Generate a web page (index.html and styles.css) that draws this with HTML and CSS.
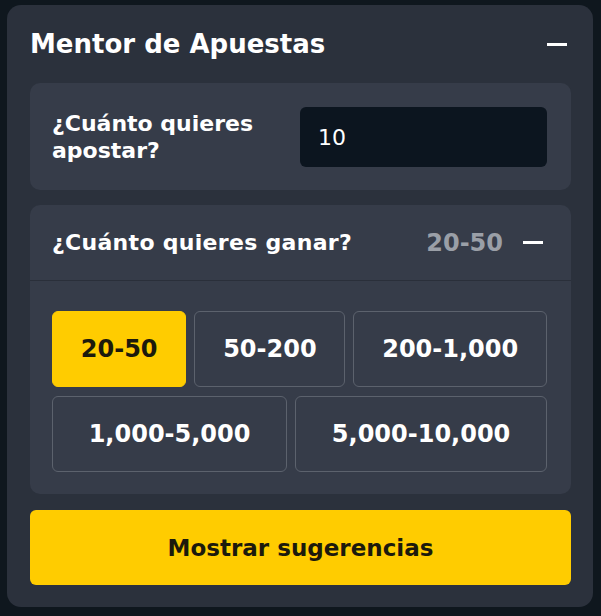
FILE: index.html
```html
<!DOCTYPE html>
<html lang="es">

<head>
    <meta charset="UTF-8">
    <meta name="viewport" content="width=device-width, initial-scale=1.0">
    <title>Mentor de Apuestas</title>
    <link rel="stylesheet" href="styles.css">
</head>

<body>
    <div class="mentor">
        <div class="mentor-header">
            <h1>Mentor de Apuestas</h1>
            <span class="dash"></span>
        </div>

        <div class="card stake">
            <label for="stake">¿Cuánto quieres apostar?</label>
            <input type="text" id="stake" value="10">
        </div>

        <div class="card win">
            <div class="win-header">
                <span class="win-title">¿Cuánto quieres ganar?</span>
                <span class="win-value">20-50</span>
                <span class="dash"></span>
            </div>
            <div class="ranges">
                <button class="range active">20-50</button>
                <button class="range">50-200</button>
                <button class="range">200-1,000</button>
                <button class="range">1,000-5,000</button>
                <button class="range">5,000-10,000</button>
            </div>
        </div>

        <button class="show">Mostrar sugerencias</button>
    </div>
</body>

</html>
```

FILE: styles.css
```css
body {
    font-family: "DejaVu Sans", sans-serif;
    background-color: #0f171e;
    color: white;
    margin: 0;
    padding: 5px 8px 9px 7px;
}

.mentor {
    background-color: #2b313c;
    border-radius: 14px;
    padding: 0 22px 22px 23px;
}

.mentor-header {
    display: flex;
    align-items: center;
    justify-content: space-between;
    height: 78px;
}

h1 {
    margin: 0;
    font-size: 26px;
    font-weight: 700;
}

.dash {
    display: block;
    width: 20px;
    height: 3px;
    background-color: white;
    margin-right: 4px;
}

.card {
    background-color: #363c49;
    border-radius: 10px;
}

.stake {
    display: flex;
    align-items: center;
    justify-content: space-between;
    padding: 24px 24px 23px 22px;
    margin-bottom: 15px;
}

.stake label {
    font-size: 22px;
    font-weight: 700;
    line-height: 27px;
    width: 230px;
}

.stake input {
    width: 247px;
    height: 60px;
    box-sizing: border-box;
    background-color: #0c151f;
    border: none;
    border-radius: 6px;
    color: white;
    font-family: inherit;
    font-size: 22px;
    padding: 0 18px;
    outline: none;
}

.win {
    margin-bottom: 16px;
}

.win-header {
    display: flex;
    align-items: center;
    height: 75px;
    padding: 0 24px 0 22px;
    border-bottom: 1px solid #2a2f3a;
}

.win-title {
    flex: 1;
    font-size: 22px;
    font-weight: 700;
    letter-spacing: 0.3px;
}

.win-value {
    color: #9a9fa7;
    font-size: 24px;
    font-weight: 700;
    margin-right: 20px;
}

.ranges {
    display: flex;
    flex-wrap: wrap;
    gap: 9px 8px;
    padding: 30px 24px 22px 22px;
}

.range {
    flex-grow: 1;
    height: 76px;
    padding: 0 24px;
    background-color: #363c49;
    border: 1px solid #5c626d;
    border-radius: 6px;
    color: white;
    font-family: inherit;
    font-size: 24px;
    font-weight: 700;
    cursor: pointer;
}

.range.active {
    background-color: #ffcc00;
    border-color: #ffcc00;
    color: #1c1a0c;
}

.show {
    display: block;
    width: 100%;
    height: 75px;
    background-color: #ffcc00;
    border: none;
    border-radius: 6px;
    color: #1c1a0c;
    font-family: inherit;
    font-size: 23px;
    font-weight: 700;
    cursor: pointer;
}
```
